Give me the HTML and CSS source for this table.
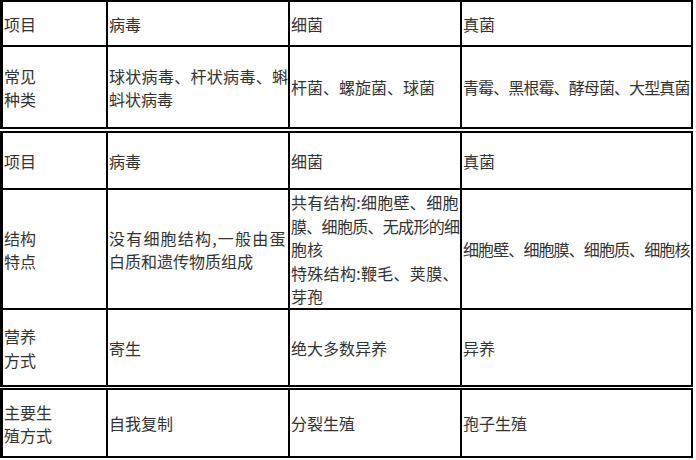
FILE: index.html
```html
<!DOCTYPE html>
<html lang="zh-CN">
<head>
<meta charset="utf-8">
<title>病毒、细菌、真菌比较</title>
<link rel="stylesheet" href="styles.css">
</head>
<body>
<div class="sheet">
  <div class="tbl tbl-a">
    <div class="cell"><div class="txt">项目</div></div>
    <div class="cell"><div class="txt">病毒</div></div>
    <div class="cell"><div class="txt">细菌</div></div>
    <div class="cell"><div class="txt">真菌</div></div>
    <div class="cell"><div class="txt">常见<br>种类</div></div>
    <div class="cell"><div class="txt"><span class="wide">球状病毒、杆状病毒、蝌</span><br>蚪状病毒</div></div>
    <div class="cell"><div class="txt">杆菌、螺旋菌、球菌</div></div>
    <div class="cell"><div class="txt fit">青霉、黑根霉、酵母菌、大型真菌</div></div>
  </div>
  <div class="tbl tbl-b">
    <div class="cell"><div class="txt">项目</div></div>
    <div class="cell"><div class="txt">病毒</div></div>
    <div class="cell"><div class="txt">细菌</div></div>
    <div class="cell"><div class="txt">真菌</div></div>
    <div class="cell"><div class="txt">结构<br>特点</div></div>
    <div class="cell"><div class="txt"><span class="spread">没有细胞结构,一般由蛋</span><br>白质和遗传物质组成</div></div>
    <div class="cell"><div class="txt"><span class="wide">共有结构:细胞壁、细胞</span><br><span class="tight">膜、细胞质、无成形的细</span><br>胞核<br><span class="wide">特殊结构:鞭毛、荚膜、</span><br>芽孢</div></div>
    <div class="cell"><div class="txt fit">细胞壁、细胞膜、细胞质、细胞核</div></div>
    <div class="cell"><div class="txt">营养<br>方式</div></div>
    <div class="cell"><div class="txt">寄生</div></div>
    <div class="cell"><div class="txt">绝大多数异养</div></div>
    <div class="cell"><div class="txt">异养</div></div>
  </div>
  <div class="tbl tbl-c">
    <div class="cell"><div class="txt">主要生<br>殖方式</div></div>
    <div class="cell"><div class="txt">自我复制</div></div>
    <div class="cell"><div class="txt">分裂生殖</div></div>
    <div class="cell"><div class="txt">孢子生殖</div></div>
  </div>
</div>
</body>
</html>
```

FILE: styles.css
```css
html, body {
  margin: 0;
  padding: 0;
  background: #ffffff;
}

.sheet {
  display: flex;
  flex-direction: column;
  align-items: flex-start;
}

.tbl {
  display: grid;
  grid-template-columns: 103px 180px 170px 229px;
  gap: 2px;
  padding: 2px 2px 2px 3px;
  background: #000000;
}

.tbl-a {
  grid-template-rows: 43px 80px;
  margin-bottom: 2px;
}

.tbl-b {
  grid-template-rows: 55px 118px 75px;
  margin-bottom: 1px;
}

.tbl-c {
  grid-template-rows: 66px;
}

.cell {
  background: #ffffff;
  display: flex;
  align-items: center;
  padding: 2px 0 0 1px;
  box-sizing: border-box;
  overflow: hidden;
}

.txt {
  white-space: nowrap;
  font-family: "Noto Sans CJK SC", "Noto Sans", sans-serif;
  font-size: 16px;
  letter-spacing: 0;
  line-height: 23.5px;
  color: #333333;
}

.fit {
  letter-spacing: -0.9px;
}

.wide {
  letter-spacing: 0.3px;
}

.spread {
  letter-spacing: 1.2px;
}

.tight {
  letter-spacing: -0.7px;
}
```
